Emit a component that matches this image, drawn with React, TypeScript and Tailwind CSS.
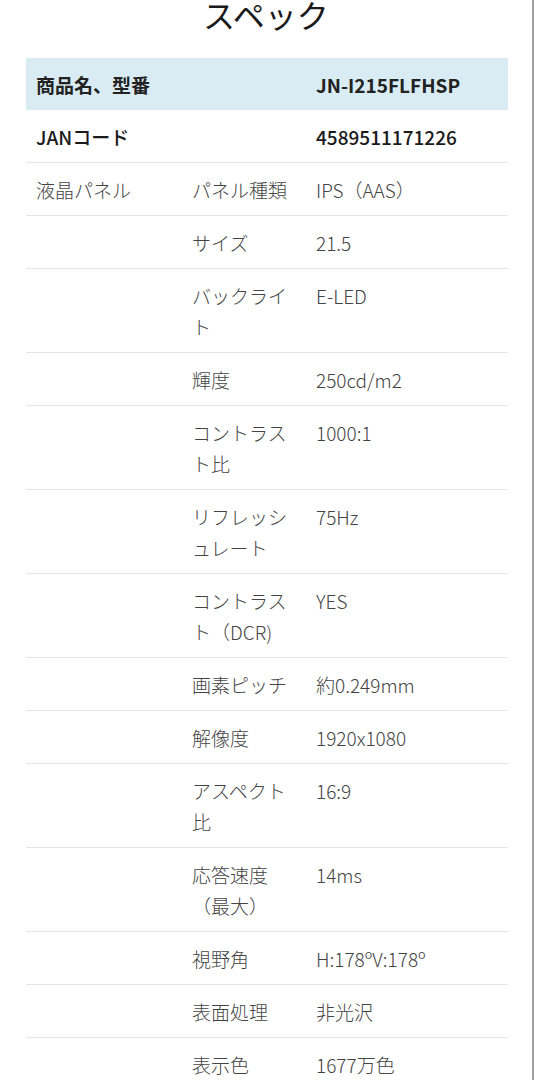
const rows: { group?: string; label: string; value: string }[] = [
  { group: '液晶パネル', label: 'パネル種類', value: 'IPS（AAS）' },
  { label: 'サイズ', value: '21.5' },
  { label: 'バックライト', value: 'E-LED' },
  { label: '輝度', value: '250cd/m2' },
  { label: 'コントラスト比', value: '1000:1' },
  { label: 'リフレッシュレート', value: '75Hz' },
  { label: 'コントラスト（DCR)', value: 'YES' },
  { label: '画素ピッチ', value: '約0.249mm' },
  { label: '解像度', value: '1920x1080' },
  { label: 'アスペクト比', value: '16:9' },
  { label: '応答速度（最大）', value: '14ms' },
  { label: '視野角', value: 'H:178ºV:178º' },
  { label: '表面処理', value: '非光沢' },
  { label: '表示色', value: '1677万色' },
]

export default function App() {
  return (
    <div
      className="h-[1080px] overflow-hidden bg-white border-r-2 border-[#a0a0a0] text-[#444]"
      style={{ fontFamily: '"Noto Sans CJK JP", "Noto Sans", sans-serif' }}
    >
      <h2 className="mt-[-6px] text-center text-[32px] leading-[40px] font-normal text-[#1a1a1a]">スペック</h2>

      <table className="ml-[26px] mt-[24px] w-[482px] table-fixed border-collapse text-[19px] leading-[31px]">
        <colgroup>
          <col className="w-[156px]" />
          <col className="w-[124px]" />
          <col className="w-[202px]" />
        </colgroup>
        <tbody>
          <tr className="bg-[#d9ecf3] font-bold text-[#222]">
            <td colSpan={2} className="pl-[10px] pt-[11px] pb-[10px]">商品名、型番</td>
            <td className="pl-[10px] pt-[11px] pb-[10px]">JN-I215FLFHSP</td>
          </tr>
          <tr className="border-b border-[#e6e6e6] font-medium text-[#1a1a1a]">
            <td colSpan={2} className="pl-[10px] pt-[11px] pb-[10px]">JANコード</td>
            <td className="pl-[10px] pt-[11px] pb-[10px]">4589511171226</td>
          </tr>
          {rows.map((r) => (
            <tr key={r.label} className="border-b border-[#e6e6e6] align-top font-light">
              <td className="pl-[10px] pt-[11px] pb-[10px]">{r.group ?? ''}</td>
              <td className="px-[10px] pt-[11px] pb-[10px]">{r.label}</td>
              <td className="pl-[10px] pt-[11px] pb-[10px]">{r.value}</td>
            </tr>
          ))}
        </tbody>
      </table>
    </div>
  )
}
